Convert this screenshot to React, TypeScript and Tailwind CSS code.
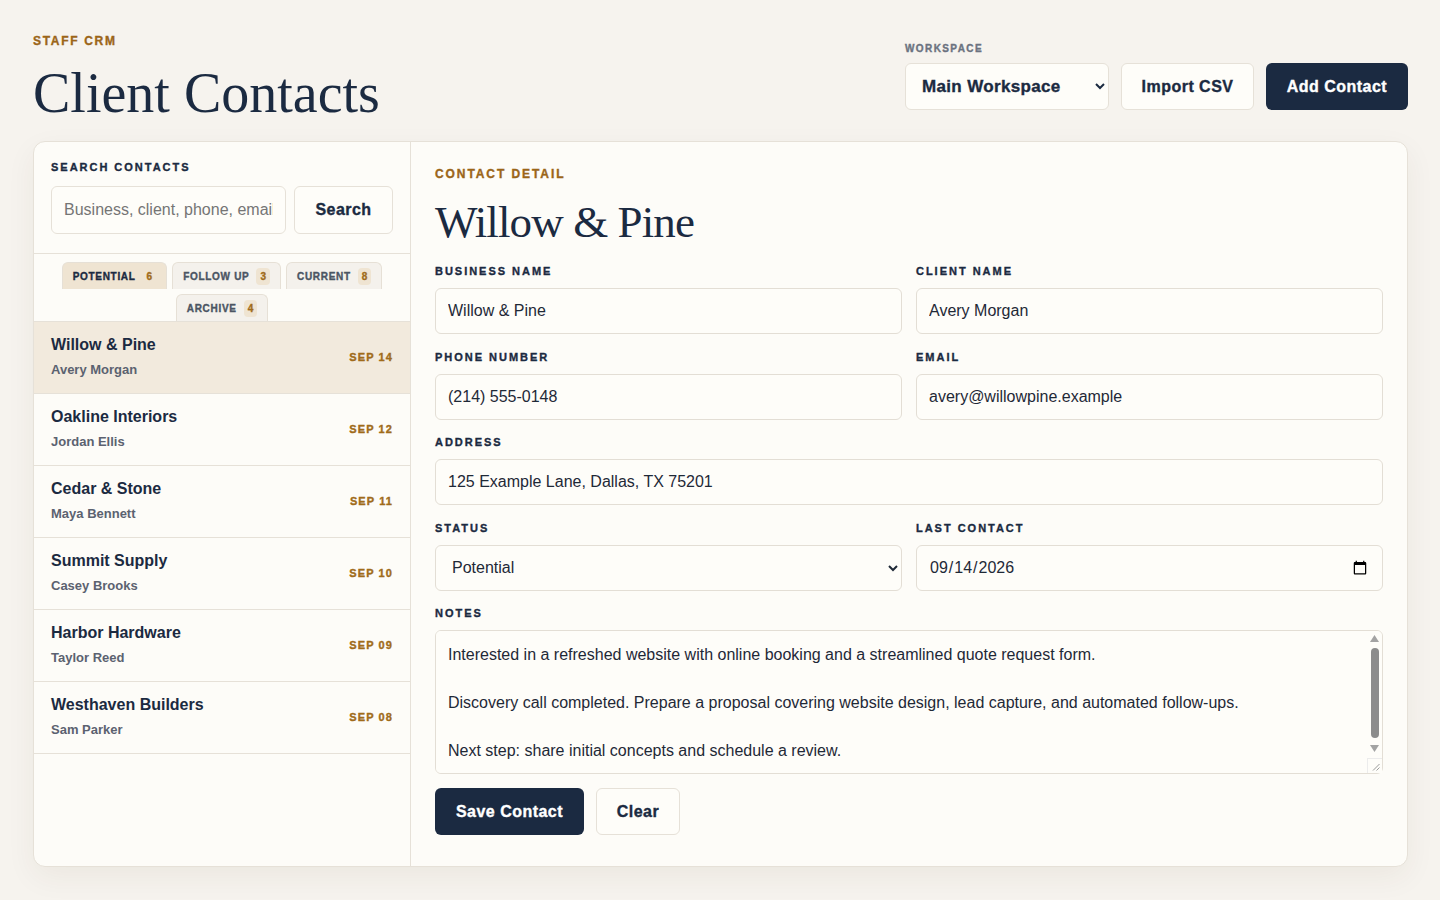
type Contact = {
  business: string
  client: string
  date: string
}

const contacts: Contact[] = [
  { business: 'Willow & Pine', client: 'Avery Morgan', date: 'SEP 14' },
  { business: 'Oakline Interiors', client: 'Jordan Ellis', date: 'SEP 12' },
  { business: 'Cedar & Stone', client: 'Maya Bennett', date: 'SEP 11' },
  { business: 'Summit Supply', client: 'Casey Brooks', date: 'SEP 10' },
  { business: 'Harbor Hardware', client: 'Taylor Reed', date: 'SEP 09' },
  { business: 'Westhaven Builders', client: 'Sam Parker', date: 'SEP 08' },
]

const notes =
  'Interested in a refreshed website with online booking and a streamlined quote request form.\n\nDiscovery call completed. Prepare a proposal covering website design, lead capture, and automated follow-ups.\n\nNext step: share initial concepts and schedule a review.\n'

const sans = "font-['Liberation_Sans',Arial,sans-serif]"
const serif = "font-['Liberation_Serif','Times_New_Roman',serif]"
const heavy = 'font-bold [-webkit-text-stroke:0.35px]'
const label = `block text-[11px] leading-[16px] uppercase tracking-[0.18em] text-[#1b2a41] ${heavy}`
const field =
  'h-[46px] w-full rounded-md border border-[#e3ded5] bg-[#fefdf9] px-3 text-[16px] text-[#1f2937] outline-none'

function Tab({ name, count, active }: { name: string; count: number; active?: boolean }) {
  return (
    <button
      type="button"
      className={`flex h-[27px] items-center gap-[7px] rounded-t-md border border-b-0 border-[#e6e0d6] px-[10px] text-[10px] uppercase tracking-[0.07em] ${heavy} ${
        active ? 'bg-[#efe4d2] text-[#1b2a41]' : 'bg-[#f4f1ec] text-[#4b5563]'
      }`}
    >
      {name}
      <span
        className={`rounded-sm px-[4px] py-[1px] text-[10px] tracking-normal text-[#a06b1a] ${
          active ? '' : 'bg-[#efe4d2]'
        }`}
      >
        {count}
      </span>
    </button>
  )
}

// the notes box scrolls, but the page is shot with scrollbars hidden, so draw one over it
function FakeScrollbar() {
  return (
    <div className="pointer-events-none absolute top-px right-px bottom-px w-[15px]">
      <svg className="absolute top-[4px] left-[3px]" width="9" height="8" viewBox="0 0 9 8">
        <polygon points="4.5,0 9,7 0,7" fill="#a3a3a3" />
      </svg>
      <div className="absolute top-[17px] left-[4px] h-[90px] w-[8px] rounded-full bg-[#8c8c8c]" />
      <svg className="absolute top-[114px] left-[3px]" width="9" height="8" viewBox="0 0 9 8">
        <polygon points="0,0 9,0 4.5,7" fill="#a3a3a3" />
      </svg>
      <div className="absolute right-0 bottom-0 h-[15px] w-[15px] border-t border-l border-[#ececec] bg-[#fefdf9]">
        <svg className="absolute right-[2px] bottom-[2px]" width="8" height="8" viewBox="0 0 8 8">
          <line x1="7.5" y1="1" x2="1" y2="7.5" stroke="#9a9a9a" strokeWidth="1" />
          <line x1="7.5" y1="4.5" x2="4.5" y2="7.5" stroke="#9a9a9a" strokeWidth="1" />
        </svg>
      </div>
    </div>
  )
}

export default function App() {
  return (
    <div className={`min-h-[900px] bg-[#f6f3ee] pl-[33px] pr-[32px] pt-[32px] pb-[32px] ${sans}`}>
      <header className="flex items-start justify-between">
        <div>
          <p className={`text-[12px] leading-[18px] uppercase tracking-[0.14em] text-[#9b6518] ${heavy}`}>Staff CRM</p>
          <h1 className={`mt-[15px] text-[56px] leading-[56px] text-[#1b2a41] ${serif}`}>Client Contacts</h1>
        </div>
        <div className="flex items-end gap-[12px] pt-[9px]">
          <div>
            <p className={`mb-[7px] text-[10px] leading-[15px] uppercase tracking-[0.14em] text-[#6b7280] ${heavy}`}>
              Workspace
            </p>
            <select
              className={`h-[47px] w-[204px] rounded-md border border-[#e6e1d8] bg-[#fefdf9] pl-3 pr-1 text-[17px] tracking-[0.02em] text-[#1b2a41] outline-none ${heavy}`}
            >
              <option>Main Workspace</option>
            </select>
          </div>
          <button
            type="button"
            className={`h-[47px] w-[133px] rounded-md border border-[#e6e1d8] bg-[#fefdf9] text-[16px] tracking-[0.03em] text-[#1b2a41] ${heavy}`}
          >
            Import CSV
          </button>
          <button
            type="button"
            className={`h-[47px] w-[142px] rounded-md bg-[#1b2a41] text-[16px] tracking-[0.03em] text-white ${heavy}`}
          >
            Add Contact
          </button>
        </div>
      </header>

      <main className="mt-[20px] flex h-[726px] overflow-hidden rounded-xl border border-[#e6e1d8] bg-[#fdfcf8] shadow-[0_10px_30px_rgba(60,45,20,0.06)]">
        <aside className="flex w-[377px] shrink-0 flex-col border-r border-[#e6e1d8]">
          <div className="border-b border-[#e6e1d8] px-[17px] pt-[17px] pb-[19px]">
            <p className={label}>Search Contacts</p>
            <div className="mt-[11px] flex gap-2">
              <input
                className="h-[48px] w-[235px] rounded-md border border-[#e6e1d8] bg-[#fefdf9] px-3 text-[16px] text-[#1f2937] outline-none placeholder:text-[#757575]"
                placeholder="Business, client, phone, email"
              />
              <button
                type="button"
                className={`h-[48px] flex-1 rounded-md border border-[#e6e1d8] bg-[#fefdf9] text-[16px] tracking-[0.03em] text-[#1b2a41] ${heavy}`}
              >
                Search
              </button>
            </div>
          </div>
          <div className="flex flex-wrap justify-center gap-x-[5px] gap-y-[5px] px-[10px] pt-[8px]">
            <Tab name="Potential" count={6} active />
            <Tab name="Follow Up" count={3} />
            <Tab name="Current" count={8} />
            <Tab name="Archive" count={4} />
          </div>
          <ul className="border-t border-[#e6e1d8]">
            {contacts.map((c, i) => (
              <li
                key={c.business}
                className={`flex h-[72px] items-center justify-between border-b border-[#e6e1d8] px-[17px] ${
                  i === 0 ? 'bg-[#f2eadd]' : ''
                }`}
              >
                <div>
                  <p className="text-[16px] font-bold leading-[20px] text-[#1b2a41]">{c.business}</p>
                  <p className="mt-[5px] text-[13px] font-bold text-[#5b6270]">{c.client}</p>
                </div>
                <span className={`text-[11px] tracking-[0.1em] text-[#a06b1a] ${heavy}`}>{c.date}</span>
              </li>
            ))}
          </ul>
        </aside>

        <section className="flex-1 px-[24px] pt-[24px]">
          <p className={`text-[12px] leading-[16px] uppercase tracking-[0.16em] text-[#9b6518] ${heavy}`}>
            Contact Detail
          </p>
          <h2 className={`mt-[15px] text-[45px] leading-[50px] tracking-[-0.02em] text-[#1b2a41] ${serif}`}>
            Willow &amp; Pine
          </h2>

          <div className="mt-[16px] grid grid-cols-2 gap-x-[14px] gap-y-[14.5px]">
            <div>
              <label className={label}>Business Name</label>
              <input className={`${field} mt-[9px]`} defaultValue="Willow & Pine" />
            </div>
            <div>
              <label className={label}>Client Name</label>
              <input className={`${field} mt-[9px]`} defaultValue="Avery Morgan" />
            </div>
            <div>
              <label className={label}>Phone Number</label>
              <input className={`${field} mt-[9px]`} defaultValue="(214) 555-0148" />
            </div>
            <div>
              <label className={label}>Email</label>
              <input className={`${field} mt-[9px]`} defaultValue="avery@willowpine.example" />
            </div>
            <div className="col-span-2">
              <label className={label}>Address</label>
              <input className={`${field} mt-[9px]`} defaultValue="125 Example Lane, Dallas, TX 75201" />
            </div>
            <div>
              <label className={label}>Status</label>
              <select className={`${field} mt-[9px] pr-2`} defaultValue="Potential">
                <option>Potential</option>
                <option>Follow Up</option>
                <option>Current</option>
                <option>Archive</option>
              </select>
            </div>
            <div>
              <label className={label}>Last Contact</label>
              <input type="date" className={`${field} mt-[9px]`} defaultValue="2026-09-14" />
            </div>
            <div className="col-span-2">
              <label className={label}>Notes</label>
              <div className="relative mt-[9px]">
                <textarea
                  className="block h-[144px] w-full resize-none rounded-md border border-[#e3ded5] bg-[#fefdf9] py-[12px] pr-[30px] pl-3 text-[16px] leading-[24px] text-[#1f2937] outline-none"
                  defaultValue={notes}
                />
                <FakeScrollbar />
              </div>
            </div>
          </div>

          <div className="mt-[14px] flex gap-3">
            <button
              type="button"
              className={`h-[47px] w-[149px] rounded-md bg-[#1b2a41] text-[16px] tracking-[0.03em] text-white ${heavy}`}
            >
              Save Contact
            </button>
            <button
              type="button"
              className={`h-[47px] w-[84px] rounded-md border border-[#e6e1d8] bg-[#fefdf9] text-[16px] tracking-[0.03em] text-[#1b2a41] ${heavy}`}
            >
              Clear
            </button>
          </div>
        </section>
      </main>
    </div>
  )
}
